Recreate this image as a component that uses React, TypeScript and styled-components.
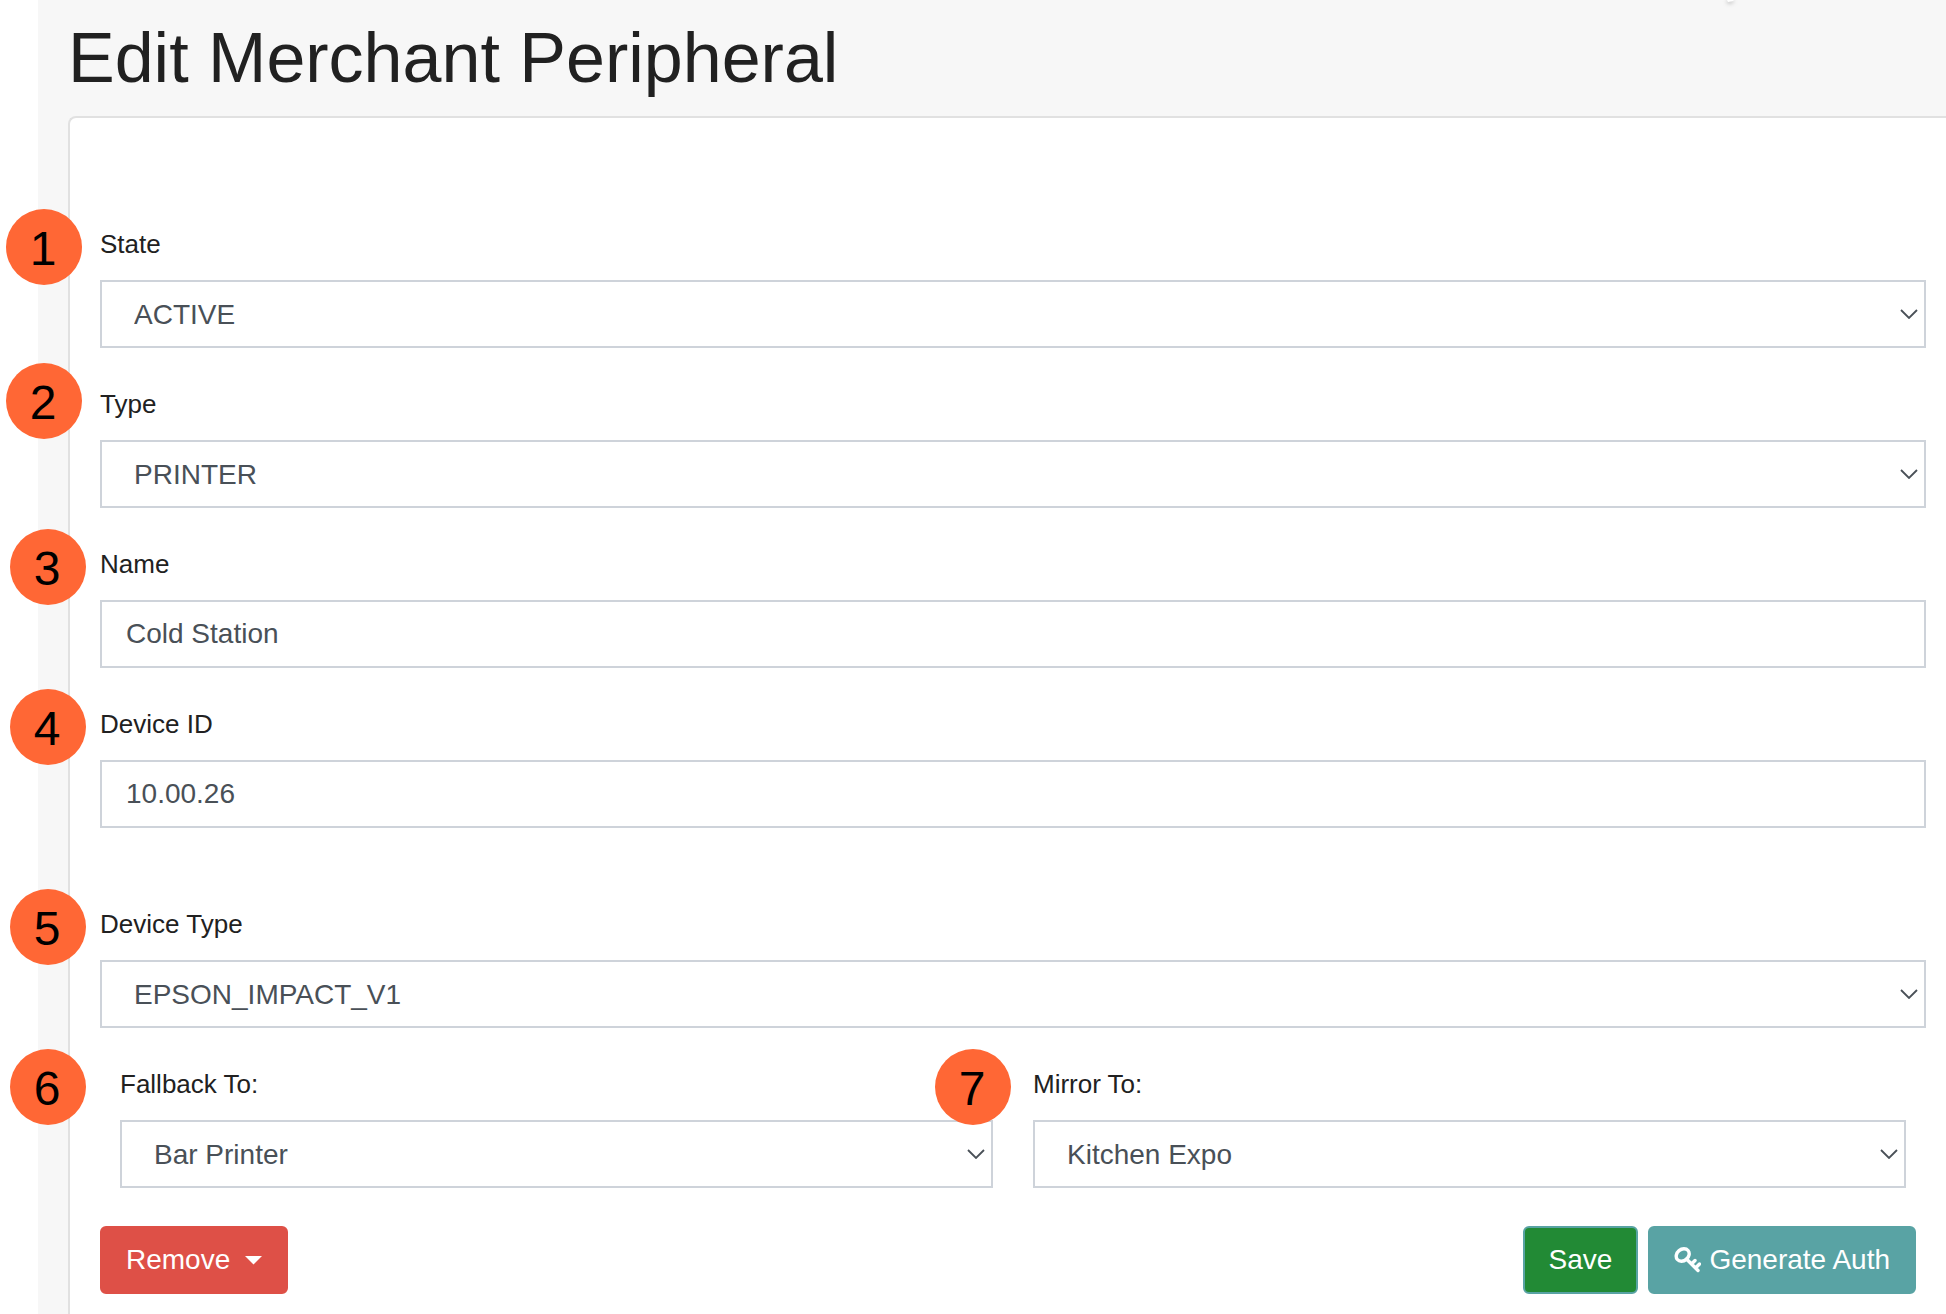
import React, { useId } from "react";
import styled, { createGlobalStyle } from "styled-components";

const GlobalStyle = createGlobalStyle`
  *, *::before, *::after { box-sizing: border-box; }
  body {
    margin: 0;
    background: #ffffff;
    color: #212121;
    font-family: "Liberation Sans", Arial, Helvetica, sans-serif;
  }
`;

const Page = styled.main`
  position: relative;
  min-height: 100vh;
  margin-left: 38px;
  padding: 16px 0 0 30px;
  background: #f7f7f7;
  display: flex;
  flex-direction: column;
`;

const Title = styled.h1`
  margin: 0 0 16px;
  font-size: 70px;
  line-height: 84px;
  font-weight: 400;
`;

const Card = styled.form`
  flex: 1;
  display: flex;
  flex-direction: column;
  padding: 106px 20px 16px 30px;
  background: #ffffff;
  border: 2px solid #e1e1e1;
  border-right: 0;
  border-bottom: 0;
  border-top-left-radius: 8px;
`;

const Stack = styled.div`
  display: flex;
  flex-direction: column;
  gap: 36px;
`;

const Section = styled(Stack)`
  margin-top: 76px;
`;

const Columns = styled.div`
  display: grid;
  grid-template-columns: 1fr 1fr;
  gap: 40px;
  padding: 0 20px;
`;

const FieldBox = styled.div`
  position: relative;
  display: flex;
  flex-direction: column;
  gap: 16px;
`;

const Label = styled.label`
  font-size: 26px;
  line-height: 40px;
`;

const Input = styled.input`
  width: 100%;
  height: 68px;
  padding: 0 24px;
  border: 2px solid #ced3da;
  border-radius: 0;
  background: #ffffff;
  color: #495057;
  font: inherit;
  font-size: 28px;
`;

const SelectBox = styled.div`
  display: grid;
  align-items: center;
`;

const Select = styled.select`
  grid-area: 1 / 1;
  appearance: none;
  width: 100%;
  height: 68px;
  padding: 0 32px;
  border: 2px solid #ced3da;
  border-radius: 0;
  background: #ffffff;
  color: #495057;
  font: inherit;
  font-size: 28px;
`;

const Chevron = styled.svg`
  grid-area: 1 / 1;
  justify-self: end;
  margin-right: 8px;
  pointer-events: none;
`;

const Marker = styled.span<{ $x: number; $y: number }>`
  position: absolute;
  left: ${(p) => p.$x}px;
  top: ${(p) => p.$y}px;
  width: 76px;
  height: 76px;
  padding: 4px 2px 0 0;
  border-radius: 50%;
  background: #ff6735;
  color: #000000;
  display: flex;
  align-items: center;
  justify-content: center;
  font-size: 48px;
  line-height: 72px;
  z-index: 1;
`;

const Actions = styled.div`
  display: flex;
  gap: 10px;
  margin: 38px 10px 0 0;
`;

const Button = styled.button<{ $fill: string; $edge: string }>`
  display: flex;
  align-items: center;
  height: 68px;
  padding: 0 24px;
  border: 2px solid ${(p) => p.$edge};
  border-radius: 6px;
  background: ${(p) => p.$fill};
  color: #ffffff;
  font: inherit;
  font-size: 28px;
  white-space: nowrap;
`;

const RemoveButton = styled(Button)`
  gap: 15px;
  margin-right: auto;
`;

const KeyButton = styled(Button)`
  gap: 8px;
`;

const Scrap = styled.svg`
  position: absolute;
  top: 0;
  right: 206px;
  filter: drop-shadow(0 1px 2px rgba(0, 0, 0, 0.5));
`;

type FieldProps = { n: number; label: string; value: string; x: number; y?: number };

function SelectField({ n, label, value, x, y = -15 }: FieldProps) {
  const id = useId();
  return (
    <FieldBox>
      <Marker $x={x} $y={y}>{n}</Marker>
      <Label htmlFor={id}>{label}</Label>
      <SelectBox>
        <Select id={id} defaultValue={value}>
          <option value={value}>{value}</option>
        </Select>
        <Chevron width="18" height="10" viewBox="0 0 18 10" fill="none" aria-hidden="true">
          <path d="M1 1l8 8 8-8" stroke="#495057" strokeWidth="1.800" />
        </Chevron>
      </SelectBox>
    </FieldBox>
  );
}

function TextField({ n, label, value, x, y = -15 }: FieldProps) {
  const id = useId();
  return (
    <FieldBox>
      <Marker $x={x} $y={y}>{n}</Marker>
      <Label htmlFor={id}>{label}</Label>
      <Input id={id} type="text" defaultValue={value} />
    </FieldBox>
  );
}

export default function App() {
  return (
    <>
      <GlobalStyle />
      <Page>
        <Scrap width="20" height="8" viewBox="0 0 20 8" aria-hidden="true">
          <path d="M7 0h7l-1 1-5 1z" fill="#ffffff" />
        </Scrap>
        <Title>Edit Merchant Peripheral</Title>
        <Card>
          <Stack>
            <SelectField n={1} label="State" value="ACTIVE" x={-94} />
            <SelectField n={2} label="Type" value="PRINTER" x={-94} y={-21} />
            <TextField n={3} label="Name" value="Cold Station" x={-90} />
            <TextField n={4} label="Device ID" value="10.00.26" x={-90} />
          </Stack>
          <Section>
            <SelectField n={5} label="Device Type" value="EPSON_IMPACT_V1" x={-90} />
            <Columns>
              <SelectField n={6} label="Fallback To:" value="Bar Printer" x={-110} />
              <SelectField n={7} label="Mirror To:" value="Kitchen Expo" x={-98} />
            </Columns>
          </Section>
          <Actions>
            <RemoveButton type="button" $fill="#de5047" $edge="#de5047">
              Remove
              <svg width="17" height="9" viewBox="0 0 17 9" aria-hidden="true">
                <path d="M0 0h17l-8.500 8.500z" fill="#ffffff" />
              </svg>
            </RemoveButton>
            <Button type="submit" $fill="#228a35" $edge="#59a3a4">Save</Button>
            <KeyButton type="button" $fill="#59a3a4" $edge="#59a3a4">
              <svg width="27" height="26" viewBox="0 0 27 26" fill="none" stroke="#ffffff" aria-hidden="true">
                <ellipse cx="8.700" cy="8" rx="7" ry="5.700" transform="rotate(-40 8.700 8)" strokeWidth="3.400" />
                <path d="M12.500 12l11.500 11.500M17.500 17l3.500-3.500M21.500 21l4-4" strokeWidth="3.400" strokeLinecap="round" />
              </svg>
              Generate Auth
            </KeyButton>
          </Actions>
        </Card>
      </Page>
    </>
  );
}
